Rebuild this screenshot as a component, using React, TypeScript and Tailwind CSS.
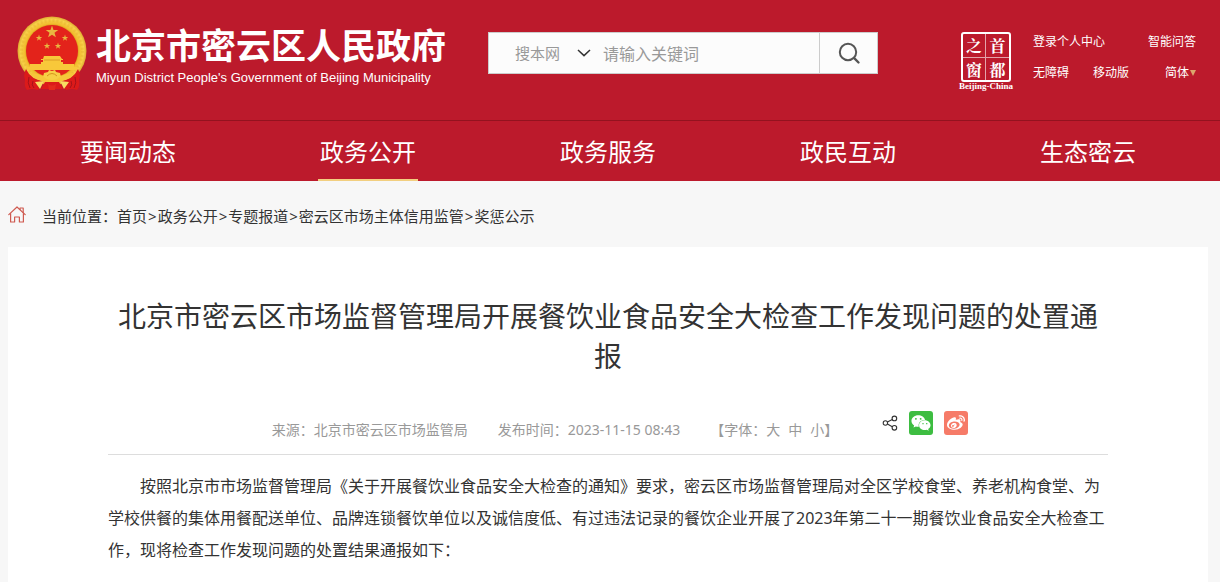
import React, { useState } from 'react';
import { FaWeibo, FaWeixin } from 'react-icons/fa';

const navItems = [
    { label: '要闻动态', active: false },
    { label: '政务公开', active: true },
    { label: '政务服务', active: false },
    { label: '政民互动', active: false },
    { label: '生态密云', active: false },
];

const crumbs = ['首页', '政务公开', '专题报道', '密云区市场主体信用监管', '奖惩公示'];

const STAR = 'M0 -10 L2.3 -3.2 L9.5 -3.1 L3.8 1.2 L5.9 8.1 L0 4 L-5.9 8.1 L-3.8 1.2 L-9.5 -3.1 L-2.3 -3.2 Z';

function Emblem() {
    return (
        <svg viewBox="0 0 70 76" className="h-[76px] w-[70px] shrink-0" aria-hidden="true">
            <defs>
                <radialGradient id="gold" cx="50%" cy="50%" r="50%">
                    <stop offset="74%" stopColor="#d99a1c" />
                    <stop offset="79%" stopColor="#f1bd2e" />
                    <stop offset="92%" stopColor="#f8d24a" />
                    <stop offset="100%" stopColor="#dca62f" />
                </radialGradient>
            </defs>
            <circle cx="35" cy="35" r="34.5" fill="url(#gold)" />
            <circle cx="35" cy="35" r="30.5" fill="none" stroke="#e0a52a" strokeWidth="3" strokeDasharray="2 2" opacity="0.3" />
            <circle cx="35" cy="35" r="26" fill="#e3231b" />
            <g fill="#e9b640">
                <path d={STAR} transform="translate(35 16) scale(0.66)" />
                <path d={STAR} transform="translate(22 22) scale(0.34)" />
                <path d={STAR} transform="translate(48 22) scale(0.34)" />
                <path d={STAR} transform="translate(30 30) scale(0.34)" />
                <path d={STAR} transform="translate(41 30) scale(0.34)" />
            </g>
            {/* gate tower */}
            <g fill="#f8c83a">
                <path d="M27 40 H43 L45 43 H46 V44 H24 V43 H26 Z" />
                <path d="M26 44 H44 V47 H26 Z" />
                <path d="M24 46 H46 V48 H24 Z" />
                <path d="M13 48 H57 V51 H61 L59 54 H11 L9 51 H13 Z" />
            </g>
            <path d="M27 44 H43" stroke="#dc9c26" strokeWidth="1" />
            {/* drapery */}
            <path d="M9 53 Q14 64 27 65 L21 74 Q15 72 10 74 Q7 71 8 64 Q6 59 9 53 Z" fill="#dc1a1a" />
            <path d="M61 53 Q56 64 43 65 L49 74 Q55 72 60 74 Q63 71 62 64 Q64 59 61 53 Z" fill="#dc1a1a" />
            <path d="M12 61 Q10 67 13 72 M16 65 Q14 69 17 72 M58 61 Q60 67 57 72 M54 65 Q56 69 53 72" fill="none" stroke="#a5121a" strokeWidth="1" />
            <path d="M27 57 L31 56 L32 54 L35 55 L38 54 L39 56 L43 57 L44 61 L41 64 H29 L26 61 Z" fill="#f7cf45" />
            <path d="M12 57 Q21 57 27 61 Q30 64 35 64 Q40 64 43 61 Q49 57 58 57 Q50 65 41 66 Q35 68 29 66 Q20 65 12 57 Z" fill="#f6c63a" />
            <path d="M30 60 Q35 55 40 60" fill="none" stroke="#d5931d" strokeWidth="1" />
            <path d="M28 66 H42 L46 73 H24 Z" fill="#dc1a1a" />
            <path d="M27 65 L18 66 L23 73 Z M43 65 L52 66 L47 73 Z" fill="#f8dc62" />
            <path d="M31 68 Q35 71 39 68 L38 74 H32 Z" fill="#e22a1d" />
        </svg>
    );
}

function SearchIcon() {
    return (
        <svg viewBox="0 0 24 24" className="size-6" fill="none" stroke="#555" strokeWidth="2" strokeLinecap="round" aria-hidden="true">
            <circle cx="11" cy="11" r="8.2" />
            <path d="M17.2 17.2 L21.5 21.5" strokeWidth="2.4" />
        </svg>
    );
}

function HomeIcon() {
    return (
        <svg viewBox="0 0 18 17" className="h-[17px] w-[18px] shrink-0" fill="none" stroke="#cf5a50" strokeWidth="1.2" strokeLinejoin="round" strokeLinecap="round" aria-hidden="true">
            <path d="M0.8 8.6 L9 1 L17.2 8.6" />
            <path d="M2.6 7.6 V16 H6.6 V11 H11.4 V16 H15.4 V7.6" />
            <path d="M12 3.4 V2 H15.2 V6.4" />
        </svg>
    );
}

function ShareIcon() {
    return (
        <svg viewBox="0 0 16 16" className="size-4" fill="none" stroke="#333" strokeWidth="1.1" aria-hidden="true">
            <circle cx="3.4" cy="8" r="2.2" />
            <circle cx="12.4" cy="3.4" r="2.3" />
            <circle cx="12.4" cy="12.8" r="2.3" />
            <path d="M5.4 7 L10.3 4.4 M5.4 9 L10.3 11.7" />
        </svg>
    );
}

function CapitalWindow() {
    return (
        <a href="#" className="flex w-[54px] shrink-0 flex-col items-center text-white">
            <span className="grid size-[50px] grid-cols-2 rounded-[3px] border-2 border-white font-['Noto_Serif_CJK_SC','Noto_Sans_CJK_SC',serif] text-base leading-[23px] font-bold">
                <span className="border-r border-white/60 text-center">之</span>
                <span className="text-center">首</span>
                <span className="border-t border-r border-white/60 text-center">窗</span>
                <span className="border-t border-white/60 text-center">都</span>
            </span>
            <span className="font-['Liberation_Serif',serif] text-[9px] leading-[8px] font-bold whitespace-nowrap">Beijing-China</span>
        </a>
    );
}

function SearchBox() {
    const [scope, setScope] = useState('搜本网');
    const [keyword, setKeyword] = useState('');

    return (
        <form className="flex h-[42px] w-[390px] shrink-0 border border-[#ccc] bg-[#fcfcfc]" onSubmit={(e) => e.preventDefault()}>
            <div className="relative w-[114px] shrink-0">
                <select
                    aria-label="搜索范围"
                    value={scope}
                    onChange={(e) => setScope(e.target.value)}
                    className="h-full w-full appearance-none pl-[26px] text-[15px] text-[#999] outline-none"
                >
                    <option>搜本网</option>
                </select>
                <svg viewBox="0 0 14 8" className="pointer-events-none absolute top-4 right-3 h-2 w-3.5" fill="none" stroke="#333" strokeWidth="1.5" aria-hidden="true">
                    <path d="M1 1 L7 6.6 L13 1" />
                </svg>
            </div>
            <input
                type="text"
                aria-label="关键词"
                value={keyword}
                onChange={(e) => setKeyword(e.target.value)}
                placeholder="请输入关键词"
                className="min-w-0 flex-1 pt-0.5 text-base text-[#333] outline-none placeholder:text-[#999]"
            />
            <button type="submit" aria-label="搜索" className="flex w-[58px] shrink-0 items-center justify-center border-l border-[#ccc]">
                <SearchIcon />
            </button>
        </form>
    );
}

function Header() {
    return (
        <header className="bg-[#bc1a2c] text-white">
            <div className="flex h-[120px] items-start justify-between pt-4 pr-6 pl-[17px]">
                <div className="flex">
                    <a href="#" className="flex w-[471px] shrink-0 gap-[9px]">
                        <Emblem />
                        <span className="pt-2 whitespace-nowrap">
                            <span className="block text-[35px] leading-[44px] font-bold">北京市密云区人民政府</span>
                            <span className="block font-['Liberation_Sans',sans-serif] text-[13px] leading-5">
                                Miyun District People&apos;s Government of Beijing Municipality
                            </span>
                        </span>
                    </a>
                    <div className="pt-4">
                        <SearchBox />
                    </div>
                </div>
                <div className="flex shrink-0 gap-5 pt-4">
                    <CapitalWindow />
                    <div className="flex w-[163px] flex-col gap-[11px] text-xs leading-5 whitespace-nowrap">
                        <div className="flex justify-between">
                            <a href="#">登录个人中心</a>
                            <a href="#">智能问答</a>
                        </div>
                        <div className="flex justify-between">
                            <span className="flex gap-6">
                                <a href="#">无障碍</a>
                                <a href="#">移动版</a>
                            </span>
                            <a href="#" className="flex items-center gap-px">
                                简体
                                <svg viewBox="0 0 6 6" className="size-1.5" fill="#dca56c" aria-hidden="true">
                                    <path d="M0 0 H6 L3 6 Z" />
                                </svg>
                            </a>
                        </div>
                    </div>
                </div>
            </div>
            <nav className="border-t border-[#93121f] pr-3 pl-2">
                <ul className="grid grid-cols-5">
                    {navItems.map((item) => (
                        <li key={item.label} className="flex justify-center">
                            <a
                                href="#"
                                className={
                                    item.active
                                        ? 'h-[60px] w-[100px] border-b-2 border-[#f2cf80] text-center text-2xl leading-[62px]'
                                        : 'h-[60px] w-[100px] text-center text-2xl leading-[62px]'
                                }
                            >
                                {item.label}
                            </a>
                        </li>
                    ))}
                </ul>
            </nav>
        </header>
    );
}

export default function App() {
    return (
        <div className="min-h-screen bg-[#f7f7f7] font-['Noto_Sans','Noto_Sans_CJK_SC',sans-serif] text-[#333]" lang="zh-CN">
            <Header />
            <main className="pr-3 pl-2">
                <div className="flex h-[66px] items-center gap-4">
                    <HomeIcon />
                    <p className="pt-1 text-[15px] leading-6">
                        当前位置：
                        {crumbs.map((crumb, i) => (
                            <React.Fragment key={crumb}>
                                {i > 0 && <span className="mx-px">&gt;</span>}
                                <a href="#">{crumb}</a>
                            </React.Fragment>
                        ))}
                    </p>
                </div>

                <article className="bg-white px-[100px] pt-[49px] pb-8">
                    <h1 className="text-center text-[28px] leading-10">
                        北京市密云区市场监督管理局开展餐饮业食品安全大检查工作发现问题的处置通报
                    </h1>

                    <div className="mt-8 flex h-[47px] items-start justify-center border-b border-[#ddd] pl-6 text-sm leading-5 text-[#999]">
                        <p className="flex items-start gap-[30px] pt-3 whitespace-nowrap">
                            <span>来源：北京市密云区市场监管局</span>
                            <span>发布时间：2023-11-15 08:43</span>
                            <span className="flex items-start gap-2">
                                <button type="button">【字体：大</button>
                                <button type="button">中</button>
                                <button type="button">小】</button>
                            </span>
                        </p>
                        <div className="ml-11 flex h-[30px] items-center gap-[11px]">
                            <button type="button" aria-label="分享">
                                <ShareIcon />
                            </button>
                            <button type="button" aria-label="微信" className="flex size-6 items-center justify-center rounded-[3px] bg-[#3dbd41] text-white">
                                <FaWeixin className="size-5" />
                            </button>
                            <button type="button" aria-label="微博" className="flex size-6 items-center justify-center rounded-[3px] bg-[#f67b68] text-white">
                                <FaWeibo className="size-[18px]" />
                            </button>
                        </div>
                    </div>

                    <p className="mt-[15px] indent-8 text-base leading-8">
                        按照北京市市场监督管理局《关于开展餐饮业食品安全大检查的通知》要求，密云区市场监督管理局对全区学校食堂、养老机构食堂、为学校供餐的集体用餐配送单位、品牌连锁餐饮单位以及诚信度低、有过违法记录的餐饮企业开展了2023年第二十一期餐饮业食品安全大检查工作，现将检查工作发现问题的处置结果通报如下：
                    </p>
                </article>
            </main>
        </div>
    );
}
